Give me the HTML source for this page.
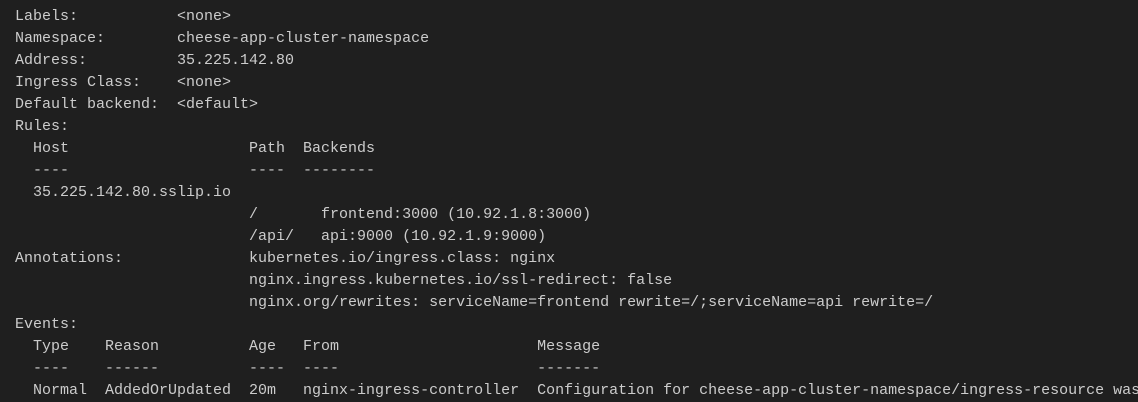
<!DOCTYPE html>
<html><head><style>
html,body{margin:0;padding:0;background:#1f1f1f;width:1138px;height:401px;overflow:hidden}
pre{margin:0;position:absolute;left:15px;top:6px;width:1123px;overflow:hidden;font-family:"Liberation Mono",monospace;font-size:15px;line-height:22px;color:#cccccc;white-space:pre}
</style></head><body><pre>Labels:           &lt;none&gt;
Namespace:        cheese-app-cluster-namespace
Address:          35.225.142.80
Ingress Class:    &lt;none&gt;
Default backend:  &lt;default&gt;
Rules:
  Host                    Path  Backends
  ----                    ----  --------
  35.225.142.80.sslip.io
                          /       frontend:3000 (10.92.1.8:3000)
                          /api/   api:9000 (10.92.1.9:9000)
Annotations:              kubernetes.io/ingress.class: nginx
                          nginx.ingress.kubernetes.io/ssl-redirect: false
                          nginx.org/rewrites: serviceName=frontend rewrite=/;serviceName=api rewrite=/
Events:
  Type    Reason          Age   From                      Message
  ----    ------          ----  ----                      -------
  Normal  AddedOrUpdated  20m   nginx-ingress-controller  Configuration for cheese-app-cluster-namespace/ingress-resource was</pre></body></html>
